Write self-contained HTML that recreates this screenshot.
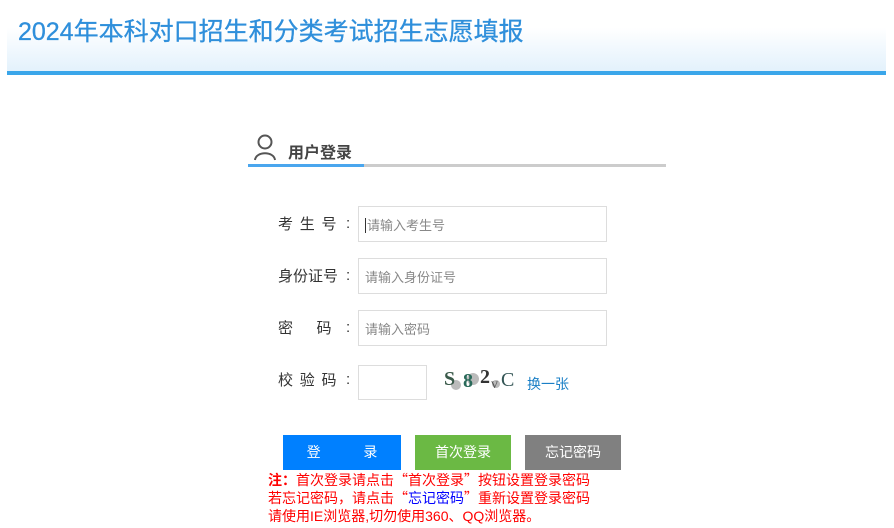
<!DOCTYPE html>
<html><head><meta charset="utf-8"><style>
*{margin:0;padding:0;box-sizing:border-box}
body{width:894px;height:528px;background:#fff;position:relative;overflow:hidden;font-family:"Liberation Sans","Noto Sans CJK SC",sans-serif}
.hdr{position:absolute;left:7px;top:0;width:879px;height:72px;background:linear-gradient(#fff 0,#fff 38%,#e2f1fc 100%)}
.line{position:absolute;left:7px;top:71px;width:879px;height:4px;background:#3aa6ea}
.title{position:absolute;left:18px;top:12px;font-size:25px;color:#2f8fdb;white-space:nowrap;-webkit-text-stroke:0.3px #2f8fdb}
.ab{position:absolute;white-space:nowrap}
.lbl{position:absolute;left:278px;font-size:15px;color:#333;font-family:"Noto Sans CJK SC",sans-serif;line-height:20px;white-space:nowrap}
.col{position:absolute;left:346px;font-size:15px;color:#333;line-height:20px}
.inp{position:absolute;left:358px;width:249px;height:36px;border:1px solid #ddd;font-size:13px;color:#888;padding:8px 0 0 6px}
.btn{position:absolute;top:435px;height:35px;color:#fff;font-size:14px;text-align:center;line-height:35px}
.note{position:absolute;left:268px;font-size:14px;color:#f00;white-space:nowrap;font-family:"Noto Sans CJK SC",sans-serif;line-height:18px}
.note .n{font-family:"Liberation Sans","Noto Sans CJK SC",sans-serif}
</style></head><body>
<div class="hdr"></div><div class="line"></div>
<div class="title">2024年本科对口招生和分类考试招生志愿填报</div>
<svg class="ab" style="left:253px;top:134px" width="26" height="28" viewBox="0 0 26 28"><circle cx="12" cy="8" r="6.5" fill="none" stroke="#555" stroke-width="2"/><path d="M2 26 C3 17 21 17 22 26" fill="none" stroke="#555" stroke-width="2"/></svg>
<div class="ab" style="left:288px;top:139px;font-size:16px;font-weight:bold;color:#444">用户登录</div>
<div class="ab" style="left:248px;top:164px;width:116px;height:3px;background:#4aa6ee"></div>
<div class="ab" style="left:364px;top:164px;width:302px;height:3px;background:#ccc"></div>
<div class="lbl" style="top:214px">考&nbsp;&nbsp;生&nbsp;&nbsp;号</div><div class="col" style="top:214px">:</div>
<div class="inp" style="top:206px"><span style="border-left:1px solid #333;padding-left:1px">请输入考生号</span></div>
<div class="lbl" style="top:266px">身份证号</div><div class="col" style="top:266px">:</div>
<div class="inp" style="top:258px">请输入身份证号</div>
<div class="lbl" style="top:318px">密&nbsp;&nbsp;&nbsp;&nbsp;&nbsp;&nbsp;&nbsp;码</div><div class="col" style="top:318px">:</div>
<div class="inp" style="top:310px">请输入密码</div>
<div class="lbl" style="top:370px">校&nbsp;&nbsp;验&nbsp;&nbsp;码</div><div class="col" style="top:370px">:</div>
<div class="inp" style="top:365px;width:69px;height:35px"></div>
<svg class="ab" style="left:443px;top:367px" width="74" height="24" viewBox="0 0 74 24"><circle cx="13" cy="18" r="5" fill="#bbb"/><circle cx="30" cy="12" r="6" fill="#bbb"/><circle cx="53" cy="17" r="4" fill="#bbb"/><text x="1" y="18" font-size="20" font-weight="bold" fill="#3a5a4a" font-family="Liberation Serif">S</text><text x="20" y="20" font-size="20" font-weight="bold" fill="#2a6a5a" font-family="Liberation Serif">8</text><text x="37" y="16" font-size="20" font-weight="bold" fill="#333" font-family="Liberation Serif">2</text><text x="48" y="21" font-size="14" fill="#555" font-family="Liberation Serif">v</text><text x="58" y="19" font-size="20" fill="#355" font-family="Liberation Serif">C</text></svg>
<div class="ab" style="left:527px;top:374px;font-size:14px;color:#1a7fc6">换一张</div>
<div class="btn" style="left:283px;width:118px;background:#0080ff">登&nbsp;&nbsp;&nbsp;&nbsp;&nbsp;&nbsp;&nbsp;&nbsp;&nbsp;&nbsp;&nbsp;录</div>
<div class="btn" style="left:415px;width:96px;background:#6bb944">首次登录</div>
<div class="btn" style="left:525px;width:96px;background:#808080">忘记密码</div>
<div class="note" style="top:471px"><b>注：</b>首次登录请点击“首次登录”按钮设置登录密码</div>
<div class="note" style="top:489px">若忘记密码，请点击“<span style="color:#00f">忘记密码</span>”重新设置登录密码</div>
<div class="note" style="top:507px">请使用<span class="n">IE</span>浏览器<span class="n">,</span>切勿使用<span class="n">360</span>、<span class="n">QQ</span>浏览器。</div>
</body></html>
